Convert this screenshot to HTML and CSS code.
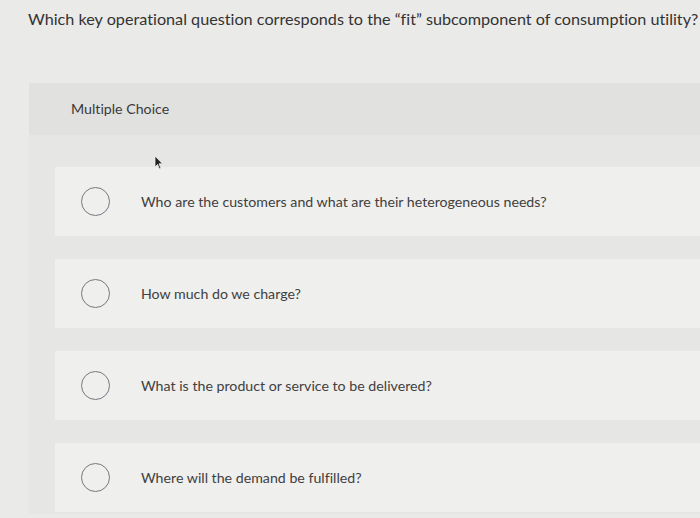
FILE: index.html
```html
<!DOCTYPE html>
<html>
<head>
<meta charset="utf-8">
<link rel="stylesheet" href="styles.css">
</head>
<body>
<p class="question">Which key operational question corresponds to the “fit” subcomponent of consumption utility?</p>
<section class="panel">
  <div class="panel-header">Multiple Choice</div>
  <div class="options">
    <div class="option"><span class="radio"></span><span class="label">Who are the customers and what are their heterogeneous needs?</span></div>
    <div class="option"><span class="radio"></span><span class="label">How much do we charge?</span></div>
    <div class="option"><span class="radio"></span><span class="label">What is the product or service to be delivered?</span></div>
    <div class="option"><span class="radio"></span><span class="label">Where will the demand be fulfilled?</span></div>
  </div>
  <svg class="cursor" width="10" height="16" viewBox="0 0 10 16"><path d="M1 1 L1 12 L3.5 9.5 L5.5 14 L7 13.3 L5 8.8 L8.5 8.8 Z" fill="#222" stroke="#eee" stroke-width="0.8"/></svg>
</section>
</body>
</html>
```

FILE: styles.css
```css
html, body {
  margin: 0;
  padding: 0;
}
body {
  background: #eaeae9;
  font-family: Lato, "Liberation Sans", sans-serif;
  font-variant-ligatures: none;
  width: 700px;
  height: 518px;
  overflow: hidden;
}
.question {
  margin: 0;
  padding: 9px 0 0 28px;
  font-size: 16.2px;
  line-height: 20px;
  color: #333;
  white-space: nowrap;
}
.panel {
  position: relative;
  margin: 54px 0 0 29px;
  background: #e6e6e5;
  height: 431px;
}
.panel-header {
  height: 52px;
  background: #e1e1e0;
  padding-left: 42px;
  font-size: 14.2px;
  line-height: 52px;
  color: #3a3a3a;
}
.options {
  padding: 32px 0 0 26px;
  display: flex;
  flex-direction: column;
  gap: 23px;
}
.option {
  height: 69px;
  background: #efefee;
  display: flex;
  align-items: center;
}
.radio {
  box-sizing: border-box;
  width: 29px;
  height: 29px;
  border: 1.5px solid #77767f;
  border-radius: 50%;
  margin-left: 26px;
  flex: none;
}
.label {
  margin-left: 31px;
  font-size: 14.2px;
  color: #404040;
}
.cursor {
  position: absolute;
  left: 125px;
  top: 72px;
}
```
